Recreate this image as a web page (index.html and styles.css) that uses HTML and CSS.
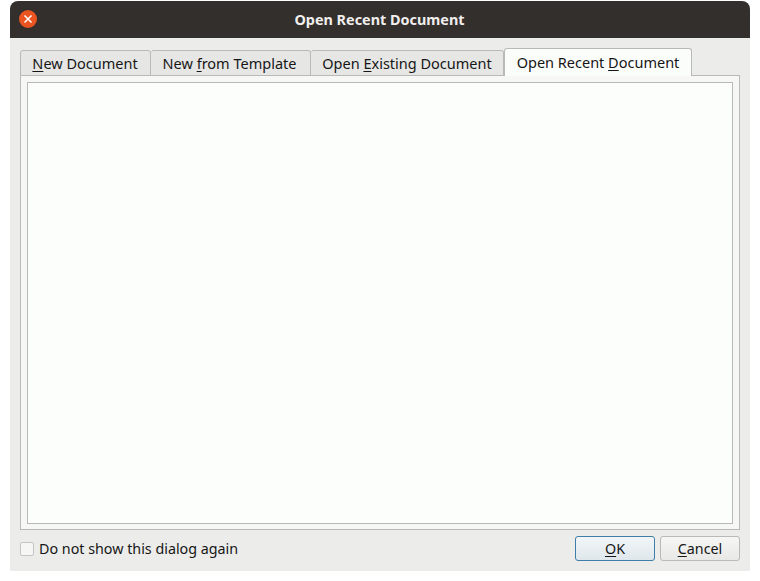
FILE: index.html
```html
<!DOCTYPE html>
<html lang="en">
<head>
<meta charset="utf-8">
<title>Open Recent Document</title>
<link rel="stylesheet" href="styles.css">
</head>
<body>
<div class="window">
  <header class="titlebar">
    <span class="close">
      <svg viewBox="0 0 10 10" width="10" height="10"><path d="M1.5 1.5L8.5 8.5M8.5 1.5L1.5 8.5" stroke="#fff" stroke-width="1.5" fill="none"/></svg>
    </span>
    <h1 class="title">Open Recent Document</h1>
  </header>
  <main class="content">
    <div class="tabs">
      <div class="tab tab-new"><u>N</u>ew Document</div>
      <div class="tab tab-template">New <u>f</u>rom Template</div>
      <div class="tab tab-existing">Open <u>E</u>xisting Document</div>
      <div class="tab tab-recent">Open Recent <u>D</u>ocument</div>
    </div>
    <div class="pane"><div class="list"></div></div>
    <div class="footer">
      <label class="check"><span class="box"></span><span class="check-label">Do not show this dialog again</span></label>
      <div class="buttons">
        <div class="btn btn-default"><u>O</u>K</div>
        <div class="btn"><u>C</u>ancel</div>
      </div>
    </div>
  </main>
</div>
</body>
</html>
```
FILE: styles.css
```css
html, body { margin: 0; padding: 0; background: #fff; }
body { width: 760px; height: 581px; overflow: hidden; font-family: "Noto Sans", sans-serif; font-size: 14.3px; color: #161616; }
u { text-underline-offset: 2px; text-decoration-thickness: 1px; }
.window { margin: 1px 10px 0; width: 740px; height: 570px; display: flex; flex-direction: column; }
.titlebar { height: 37px; flex: none; background: #332f2d; border-radius: 8px 8px 0 0; display: flex; align-items: center; justify-content: center; position: relative; }
.title { margin: 0 1px 1px 0; font-size: 14.4px; font-weight: 700; color: #f0eeec; }
.close { position: absolute; left: 9px; top: 9px; width: 18px; height: 18px; border-radius: 50%; background: #e95420; display: flex; align-items: center; justify-content: center; }
.close svg { display: block; }
.content { flex: 1; background: #ecedeb; padding: 10px; display: flex; flex-direction: column; }
.tabs { display: flex; align-items: flex-end; height: 28px; flex: none; position: relative; z-index: 1; margin-bottom: -1px; font-size: 14.5px; }
.tab { box-sizing: border-box; height: 26px; display: flex; align-items: center; justify-content: center; background: #e6e7e5; border: 1px solid #b9bab7; border-left: 0; border-radius: 3px 3px 0 0; white-space: pre; }
.tab-new { width: 131px; border-left: 1px solid #b9bab7; padding-right: 1px; }
.tab-template { width: 160px; padding-right: 2px; }
.tab-existing { width: 193px; }
.tab-recent { width: 188px; height: 28px; background: #fbfdfb; border-left: 1px solid #b9bab7; border-bottom: 0; padding-bottom: 1px; }
.pane { flex: 1; box-sizing: border-box; border: 1px solid #b9bab7; background: #f7f8f6; padding: 6px 6px 5px; display: flex; }
.list { flex: 1; background: #fcfefc; border: 1px solid #b9bab7; }
.footer { height: 25px; flex: none; margin-top: 6px; display: flex; align-items: center; justify-content: space-between; }
.check { display: flex; align-items: center; gap: 5px; }
.check-label { margin-bottom: 1px; }
.box { width: 14px; height: 14px; box-sizing: border-box; background: #f6f7f5; border: 1px solid #c4c5c2; border-radius: 2px; }
.buttons { display: flex; gap: 5px; }
.btn { box-sizing: border-box; width: 80px; height: 25px; display: flex; align-items: center; justify-content: center; white-space: pre; border: 1px solid #b9bab7; border-radius: 3px; background: linear-gradient(#f6f7f5, #e8e9e7); padding-bottom: 1px; }
.btn-default { border-color: #3f7ea8; background: linear-gradient(#f2f6f8, #dfe7ec); }
```
